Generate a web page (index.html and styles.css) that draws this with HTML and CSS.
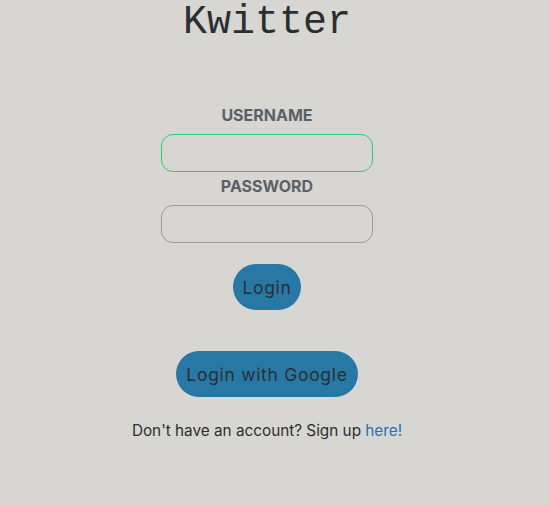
FILE: index.html
```html
<!DOCTYPE html>
<html>
<head>
<meta charset="utf-8">
<link rel="stylesheet" href="styles.css">
</head>
<body>
<div class="page">
  <h1 class="title">Kwitter</h1>
  <form class="form">
    <label class="label">USERNAME</label>
    <input class="field field-focus" type="text">
    <label class="label">PASSWORD</label>
    <input class="field" type="password">
    <button class="btn btn-login" type="button">Login</button>
  </form>
  <button class="btn btn-google" type="button">Login with Google</button>
  <p class="signup">Don't have an account? Sign up <a class="link" href="#">here!</a></p>
</div>
</body>
</html>
```
FILE: styles.css
```css
html, body {
  margin: 0;
  padding: 0;
  background: #d7d6d3;
}
body {
  font-family: Inter, "Noto Sans", sans-serif;
  color: #2b2f31;
}
.page {
  width: 549px;
  height: 506px;
  display: flex;
  flex-direction: column;
  align-items: center;
  padding-right: 15px;
  box-sizing: border-box;
}
.title {
  font-family: "Liberation Mono", monospace;
  font-weight: normal;
  font-size: 40px;
  margin: 0;
  line-height: 46px;
  color: #2b2f31;
}
.form {
  display: flex;
  flex-direction: column;
  align-items: center;
  margin-top: 59px;
}
.label {
  font-weight: 700;
  font-size: 16px;
  color: #5a6166;
  line-height: 20px;
  margin-bottom: 9px;
}
.field {
  width: 212px;
  height: 38px;
  box-sizing: border-box;
  border: 1px solid #9e9a94;
  border-radius: 12px;
  background: transparent;
  outline: none;
  margin: 0 0 4px;
}
.field-focus {
  border-color: #2ecc71;
}
.btn {
  background: #2878a6;
  border: none;
  border-radius: 23px;
  height: 46px;
  font-family: Inter, "Noto Sans", sans-serif;
  font-size: 17.5px;
  letter-spacing: 0.7px;
  color: #2b2f31;
  padding: 0;
  white-space: nowrap;
}
.btn-login {
  margin-top: 17px;
  width: 68px;
}
.btn-google {
  margin-top: 41px;
  width: 182px;
}
.signup {
  margin: 24px 0 0;
  font-size: 15.3px;
  line-height: 20px;
}
.link {
  color: #2a6eb5;
  text-decoration: none;
}
```
